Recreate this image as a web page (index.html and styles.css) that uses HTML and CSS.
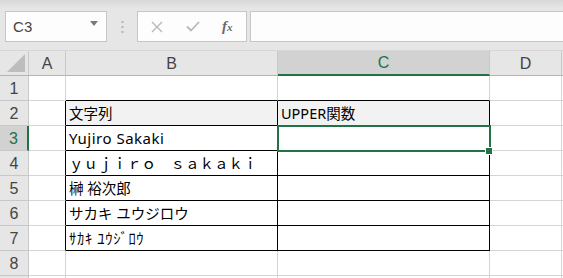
FILE: index.html
```html
<!DOCTYPE html>
<html lang="ja">
<head>
<meta charset="utf-8">
<link rel="stylesheet" href="styles.css">
</head>
<body>
<div class="toolbar">
  <div class="namebox">
    <span class="ref">C3</span>
    <svg class="caret" width="8" height="5" viewBox="0 0 8 5"><polygon points="0,0 8,0 4,5" fill="#7a7a7a"/></svg>
  </div>
  <div class="sep">
    <svg width="3" height="12" viewBox="0 0 3 12"><rect x="0.5" y="0" width="2" height="2" fill="#b4b4b4"/><rect x="0.5" y="5" width="2" height="2" fill="#b4b4b4"/><rect x="0.5" y="10" width="2" height="2" fill="#b4b4b4"/></svg>
  </div>
  <div class="fbtns">
    <svg class="ic" width="12" height="12" viewBox="0 0 12 12"><path d="M1 1 L11 11 M11 1 L1 11" stroke="#b8b8b8" stroke-width="1.4" fill="none"/></svg>
    <svg class="ic" width="14" height="11" viewBox="0 0 14 11"><path d="M1 5.5 L5 9.5 L13 1" stroke="#b8b8b8" stroke-width="1.8" fill="none"/></svg>
    <span class="fx"><i>f</i><i class="x">x</i></span>
  </div>
  <div class="formula"></div>
</div>
<div class="sheet">
  <div class="ch corner"><svg width="18" height="18" viewBox="0 0 18 18"><polygon points="18,0 18,18 0,18" fill="#bdbdbd"/></svg></div>
  <div class="ch">A</div>
  <div class="ch">B</div>
  <div class="ch sel">C</div>
  <div class="ch">D</div>
  <div class="ch end"></div>

  <div class="rh">1</div>
  <div class="c"></div>
  <div class="c bb"></div>
  <div class="c bb"></div>
  <div class="c"></div>
  <div class="c end"></div>

  <div class="rh">2</div>
  <div class="c br"></div>
  <div class="c bb br hd">文字列</div>
  <div class="c bb br hd">UPPER関数</div>
  <div class="c"></div>
  <div class="c end"></div>

  <div class="rh rsel">3</div>
  <div class="c br"></div>
  <div class="c bb br lat">Yujiro Sakaki</div>
  <div class="c bb br active"><span class="box"></span><span class="handle"></span></div>
  <div class="c"></div>
  <div class="c end"></div>

  <div class="rh">4</div>
  <div class="c br"></div>
  <div class="c bb br">ｙｕｊｉｒｏ　ｓａｋａｋｉ</div>
  <div class="c bb br"></div>
  <div class="c"></div>
  <div class="c end"></div>

  <div class="rh">5</div>
  <div class="c br"></div>
  <div class="c bb br">榊 裕次郎</div>
  <div class="c bb br"></div>
  <div class="c"></div>
  <div class="c end"></div>

  <div class="rh">6</div>
  <div class="c br"></div>
  <div class="c bb br">サカキ ユウジロウ</div>
  <div class="c bb br"></div>
  <div class="c"></div>
  <div class="c end"></div>

  <div class="rh">7</div>
  <div class="c br"></div>
  <div class="c bb br half">ｻｶｷ ﾕｳｼﾞﾛｳ</div>
  <div class="c bb br"></div>
  <div class="c"></div>
  <div class="c end"></div>

  <div class="rh">8</div>
  <div class="c"></div>
  <div class="c"></div>
  <div class="c"></div>
  <div class="c"></div>
  <div class="c end"></div>

  <div class="rh"></div>
  <div class="c"></div>
  <div class="c"></div>
  <div class="c"></div>
  <div class="c"></div>
  <div class="c end"></div>
</div>
</body>
</html>
```

FILE: styles.css
```css
html, body {
  margin: 0;
  padding: 0;
  overflow: hidden;
  background: #ffffff;
  font-family: "Noto Sans CJK JP", "Noto Sans", sans-serif;
}

.toolbar {
  height: 51px;
  box-sizing: border-box;
  border-bottom: 1px solid #d6d6d6;
  background: linear-gradient(#d9d9d9 0px, #e6e6e6 9px, #e6e6e6 100%);
  display: flex;
  align-items: flex-start;
  padding: 11px 0 0 5px;
}

.namebox {
  width: 102px;
  height: 31px;
  box-sizing: border-box;
  background: #fdfdfd;
  border: 1px solid #c6c6c6;
  display: flex;
  align-items: center;
  justify-content: space-between;
  padding: 0 8px 0 7px;
}

.ref {
  font-family: "Liberation Sans", sans-serif;
  font-size: 15px;
  color: #444;
  letter-spacing: 0.2px;
}

.caret {
  margin-top: -6px;
}

.sep {
  width: 30px;
  height: 31px;
  display: flex;
  align-items: center;
  justify-content: center;
}

.fbtns {
  width: 110px;
  height: 31px;
  box-sizing: border-box;
  background: #fdfdfd;
  border: 1px solid #c6c6c6;
  display: flex;
  align-items: center;
  padding-left: 13px;
  gap: 23px;
}

.fx {
  font-family: "Liberation Serif", serif;
  font-size: 15px;
  color: #6a6a6a;
  margin-left: -1px;
  font-weight: bold;
}

.fx .x {
  font-size: 11px;
}

.formula {
  flex: 1;
  margin-left: 3px;
  height: 31px;
  box-sizing: border-box;
  background: #fdfdfd;
  border: 1px solid #c6c6c6;
  border-right: none;
}

.sheet {
  display: grid;
  grid-template-columns: 29px 37px 212px 212px 72px 1fr;
  grid-template-rows: 25px repeat(9, 25px);
}

.sheet > div {
  box-sizing: border-box;
  border-right: 1px solid #d4d4d4;
  border-bottom: 1px solid #d4d4d4;
}

.sheet > .end {
  border-right: none;
}

.ch {
  background: #e6e6e6;
  border-right-color: #c8c8c8 !important;
  border-bottom-color: #b4b4b4 !important;
  font-family: "Liberation Sans", sans-serif;
  font-size: 16px;
  color: #444;
  display: flex;
  align-items: center;
  justify-content: center;
  padding-top: 1px;
}

.ch.corner {
  align-items: flex-end;
  justify-content: flex-end;
  padding: 0 3px 3px 0;
}

.ch.sel {
  background: #d2d2d2;
  color: #217346;
  border-bottom: 2px solid #217346 !important;
  border-bottom-color: #217346 !important;
}

.rh {
  background: #e6e6e6;
  border-right-color: #c8c8c8 !important;
  border-bottom-color: #c8c8c8 !important;
  font-family: "Liberation Sans", sans-serif;
  font-size: 16px;
  color: #444;
  display: flex;
  align-items: center;
  justify-content: center;
  padding-top: 1px;
}

.rh.rsel {
  background: #d2d2d2;
  color: #217346;
  border-right: 2px solid #217346 !important;
}

.c {
  font-family: "Noto Sans", "Noto Sans CJK JP", sans-serif;
  font-size: 14.5px;
  color: #000;
  padding: 0 0 1px 3px;
  display: flex;
  align-items: center;
  white-space: nowrap;
  overflow: visible;
}

.c.lat {
  font-size: 15px;
  letter-spacing: 0.5px;
}

.c.half {
  letter-spacing: 0.7px;
}

.sheet > .bb {
  border-bottom-color: #000;
}

.sheet > .br {
  border-right-color: #000;
}

.hd {
  background: #f2f2f2;
}

.active {
  position: relative;
}

.active .box {
  position: absolute;
  left: -1px;
  top: -1px;
  right: -2px;
  bottom: -2px;
  border: 2px solid #217346;
  z-index: 2;
}

.active .handle {
  position: absolute;
  left: 208px;
  top: 22px;
  width: 6px;
  height: 6px;
  background: #217346;
  box-shadow: 0 0 0 1px #ffffff;
  z-index: 3;
}
```
